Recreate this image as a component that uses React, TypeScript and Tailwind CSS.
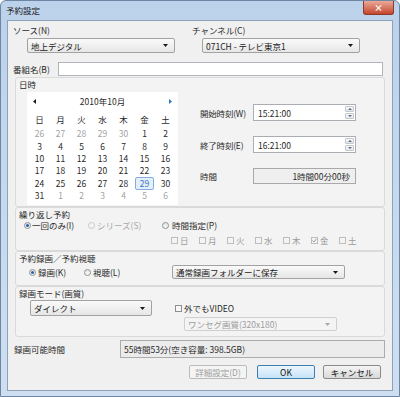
import React from 'react';

const font = "font-['Noto_Sans_CJK_JP',sans-serif]";

function Arrow({ disabled }: { disabled?: boolean }) {
  return (
    <svg width="5" height="3" viewBox="0 0 5 3" className="shrink-0">
      <path d="M0 0H5L2.5 3Z" fill={disabled ? '#a8a8a8' : '#1a1a1a'} />
    </svg>
  );
}

function Combo({ text, className = '', disabled }: { text: string; className?: string; disabled?: boolean }) {
  return (
    <div
      className={`flex items-center justify-between rounded-[2px] border pl-[3px] pr-[6px] ${
        disabled
          ? 'border-[#cfcfcf] bg-[#f4f4f4] text-[#9c9c9c]'
          : 'border-[#a2a2a2] bg-linear-to-b from-[#fafafa] to-[#e6e6e6] text-[#1a1a1a]'
      } ${className}`}
    >
      <span className="whitespace-nowrap">{text}</span>
      <Arrow disabled={disabled} />
    </div>
  );
}

function Radio({ checked, disabled }: { checked?: boolean; disabled?: boolean }) {
  return (
    <span
      className={`flex h-[7px] w-[7px] shrink-0 items-center justify-center rounded-full border ${
        disabled ? 'border-[#c9c9c9] bg-[#f4f4f4]' : 'border-[#8e8f8f] bg-linear-to-b from-[#e4e4e4] to-[#fbfbfb]'
      }`}
    >
      {checked && <span className="h-[3px] w-[3px] rounded-full bg-[#2a62a8]" />}
    </span>
  );
}

function Check({ checked, disabled }: { checked?: boolean; disabled?: boolean }) {
  return (
    <span
      className={`flex h-[7px] w-[7px] shrink-0 items-center justify-center border ${
        disabled ? 'border-[#bdbdbd] bg-[#f4f4f4]' : 'border-[#8e8f8f] bg-[#f7f7f7]'
      }`}
    >
      {checked && (
        <svg width="5" height="5" viewBox="0 0 5 5">
          <path d="M0.5 2.5L2 4L4.5 0.8" stroke="#9a9a9a" strokeWidth="1" fill="none" />
        </svg>
      )}
    </span>
  );
}

function Spin() {
  return (
    <div className="flex w-[10px] flex-col gap-[1px] self-stretch py-[1px] pr-[1px]">
      {[0, 1].map((i) => (
        <div
          key={i}
          className="flex flex-1 items-center justify-center rounded-[1px] border border-[#c3c8cd] bg-linear-to-b from-[#f8f8f8] to-[#e3e6e9]"
        >
          <svg width="4" height="2" viewBox="0 0 4 2">
            <path d={i === 0 ? 'M0 2H4L2 0Z' : 'M0 0H4L2 2Z'} fill="#5a6f8a" />
          </svg>
        </div>
      ))}
    </div>
  );
}

function Group({ title, className = '', children }: { title: string; className?: string; children?: React.ReactNode }) {
  return (
    <div className={`ml-[2px] w-[370px] rounded-[3px] border border-[#dadada] bg-[#f3f3f3] ${className}`}>
      <div className="h-[12px] pl-[3px] leading-[12px]">{title}</div>
      {children}
    </div>
  );
}

const WEEK = ['日', '月', '火', '水', '木', '金', '土'];
const ROWS: [number, boolean][][] = [
  [[26, true], [27, true], [28, true], [29, true], [30, true], [1, false], [2, false]],
  [3, 4, 5, 6, 7, 8, 9].map((d) => [d, false]),
  [10, 11, 12, 13, 14, 15, 16].map((d) => [d, false]),
  [17, 18, 19, 20, 21, 22, 23].map((d) => [d, false]),
  [24, 25, 26, 27, 28, 29, 30].map((d) => [d, false]),
  [[31, false], [1, true], [2, true], [3, true], [4, true], [5, true], [6, true]],
];

function Calendar() {
  return (
    <div className="h-[113px] w-[151px] shrink-0 bg-white px-[2px]">
      <div className="flex h-[18px] items-center justify-between px-[4px]">
        <svg width="3" height="5" viewBox="0 0 3 5">
          <path d="M3 0V5L0 2.5Z" fill="#1a1a1a" />
        </svg>
        <span>2010年10月</span>
        <svg width="3" height="5" viewBox="0 0 3 5">
          <path d="M0 0V5L3 2.5Z" fill="#2f6fc0" />
        </svg>
      </div>
      <div className="grid h-[17px] grid-cols-7 items-center text-center">
        {WEEK.map((w) => (
          <span key={w}>{w}</span>
        ))}
      </div>
      {ROWS.map((row, r) => (
        <div key={r} className="grid h-[12.4px] grid-cols-7 items-center text-center leading-[12px]">
          {row.map(([d, other], c) => {
            const sel = r === 4 && d === 29;
            return (
              <span key={c} className="flex justify-center">
                <span
                  className={
                    sel
                      ? 'w-[19px] rounded-[2px] border border-[#84ace0] bg-[#e4effc] leading-[11px] text-[#3b73c4]'
                      : other
                        ? 'text-[#a3a3a3]'
                        : 'text-[#2a2a2a]'
                  }
                >
                  {d}
                </span>
              </span>
            );
          })}
        </div>
      ))}
    </div>
  );
}

function TimeField({ value }: { value: string }) {
  return (
    <div className="flex h-[17px] w-[103px] items-center justify-between border border-[#abadb3] bg-white pl-[4px]">
      <span>{value}</span>
      <Spin />
    </div>
  );
}

function Button({ label, kind }: { label: string; kind?: 'default' | 'disabled' }) {
  const cls =
    kind === 'default'
      ? 'border-[#3c7fb1] bg-linear-to-b from-[#edf6fd] to-[#c6e3f7] text-[#111]'
      : kind === 'disabled'
        ? 'border-[#b8bcbf] bg-[#f4f4f4] text-[#9e9e9e]'
        : 'border-[#8a8a8a] bg-linear-to-b from-[#f4f4f4] to-[#d9d9d9] text-[#111]';
  return (
    <div className={`flex h-[14px] w-[58px] items-center justify-center rounded-[2px] border ${cls}`}>{label}</div>
  );
}

export default function App() {
  return (
    <div
      className={`${font} h-[397px] w-[400px] overflow-hidden rounded-t-[6px] border border-[#6d86a3] bg-linear-to-b from-[#bcd2ea] to-[#cfdff1] text-[8.5px] leading-[12px] text-[#2a2a2a]`}
    >
      <div className="flex h-[19px] items-start justify-between">
        <span className="pl-[5px] leading-[19px] text-[#1a1a1a]">予約設定</span>
        <div className="mr-[5px] flex h-[14px] w-[31px] items-center justify-center rounded-b-[3px] border border-t-0 border-[#8b3a2c] bg-linear-to-b from-[#e9a999] to-[#c4442c] text-[9px] font-bold text-white">
          ×
        </div>
      </div>

      <div className="ml-[6px] h-[371px] w-[386px] border border-[#8ea3ba] bg-[#f0f0f0] px-[5px]">
        <div className="flex pt-[3px]">
          <div className="w-[179px]">
            <div className="h-[12px]">ソース(N)</div>
            <Combo text="地上デジタル" className="ml-[14px] mt-[2px] h-[15px] w-[148px]" />
          </div>
          <div>
            <div className="h-[12px]">チャンネル(C)</div>
            <Combo text="071CH - テレビ東京1" className="ml-[10px] mt-[2px] h-[15px] w-[158px]" />
          </div>
        </div>

        <div className="mt-[9px] flex h-[14px] items-center">
          <span className="w-[45px]">番組名(B)</span>
          <div className="h-[14px] w-[325px] border border-[#b1b5bb] bg-white" />
        </div>

        <Group title="日時" className="mt-[1px] h-[130px]">
          <div className="mt-[2px] flex">
            <div className="ml-[11px]">
              <Calendar />
            </div>
            <div className="ml-[22px] mt-[12px] flex flex-col">
              <div className="flex h-[17px] items-center">
                <span className="w-[53px] tracking-[-0.2px]">開始時刻(W)</span>
                <TimeField value="15:21:00" />
              </div>
              <div className="mt-[15px] flex h-[17px] items-center">
                <span className="w-[53px] tracking-[-0.2px]">終了時刻(E)</span>
                <TimeField value="16:21:00" />
              </div>
              <div className="mt-[15px] flex h-[16px] items-center">
                <span className="w-[53px]">時間</span>
                <div className="flex h-[16px] w-[103px] items-center justify-end border border-[#a9a9a9] bg-[#efefef] pr-[5px]">
                  1時間00分00秒
                </div>
              </div>
            </div>
          </div>
        </Group>

        <Group title="繰り返し予約" className="h-[44px]">
          <div className="flex h-[10px] items-center pl-[8px]">
            <div className="flex w-[64px] items-center gap-[1px]">
              <Radio checked />
              <span>一回のみ(I)</span>
            </div>
            <div className="flex w-[74px] items-center gap-[2px] text-[#a8a8a8]">
              <Radio disabled />
              <span>シリーズ(S)</span>
            </div>
            <div className="flex items-center gap-[3px]">
              <Radio />
              <span>時間指定(P)</span>
            </div>
          </div>
          <div className="mt-[4px] flex h-[12px] items-center pl-[155px] text-[#9a9a9a]">
            {WEEK.map((w) => (
              <div key={w} className="flex w-[28px] items-center gap-[2px]">
                <Check disabled checked={w === '金'} />
                <span>{w}</span>
              </div>
            ))}
          </div>
        </Group>

        <Group title="予約録画／予約視聴" className="h-[35px]">
          <div className="flex h-[16px] items-center">
            <div className="ml-[13px] flex w-[55px] items-center gap-[2px]">
              <Radio checked />
              <span>録画(K)</span>
            </div>
            <div className="flex w-[88px] items-center gap-[2px]">
              <Radio />
              <span>視聴(L)</span>
            </div>
            <Combo text="通常録画フォルダーに保存" className="h-[14px] w-[173px]" />
          </div>
        </Group>

        <Group title="録画モード(画質)" className="h-[51px]">
          <div className="mt-[1px] flex">
            <Combo text="ダイレクト" className="ml-[14px] h-[16px] w-[122px]" />
            <div className="ml-[23px] flex flex-col">
              <div className="flex h-[16px] items-center gap-[2px]">
                <Check />
                <span>外でもVIDEO</span>
              </div>
              <Combo disabled text="ワンセグ画質(320x180)" className="ml-[9px] mt-[1px] h-[14px] w-[153px]" />
            </div>
          </div>
        </Group>

        <div className="mt-[3px] flex h-[18px] items-center">
          <span className="ml-[1px] w-[106px]">録画可能時間</span>
          <div className="flex h-[18px] w-[265px] items-center border border-[#acacac] bg-[#ececec] pl-[3px]">
            55時間53分(空き容量: 398.5GB)
          </div>
        </div>

        <div className="mt-[7px] flex">
          <div className="ml-[176px]">
            <Button label="詳細設定(D)" kind="disabled" />
          </div>
          <div className="ml-[10px]">
            <Button label="OK" kind="default" />
          </div>
          <div className="ml-[8px]">
            <Button label="キャンセル" />
          </div>
        </div>
      </div>
    </div>
  );
}
